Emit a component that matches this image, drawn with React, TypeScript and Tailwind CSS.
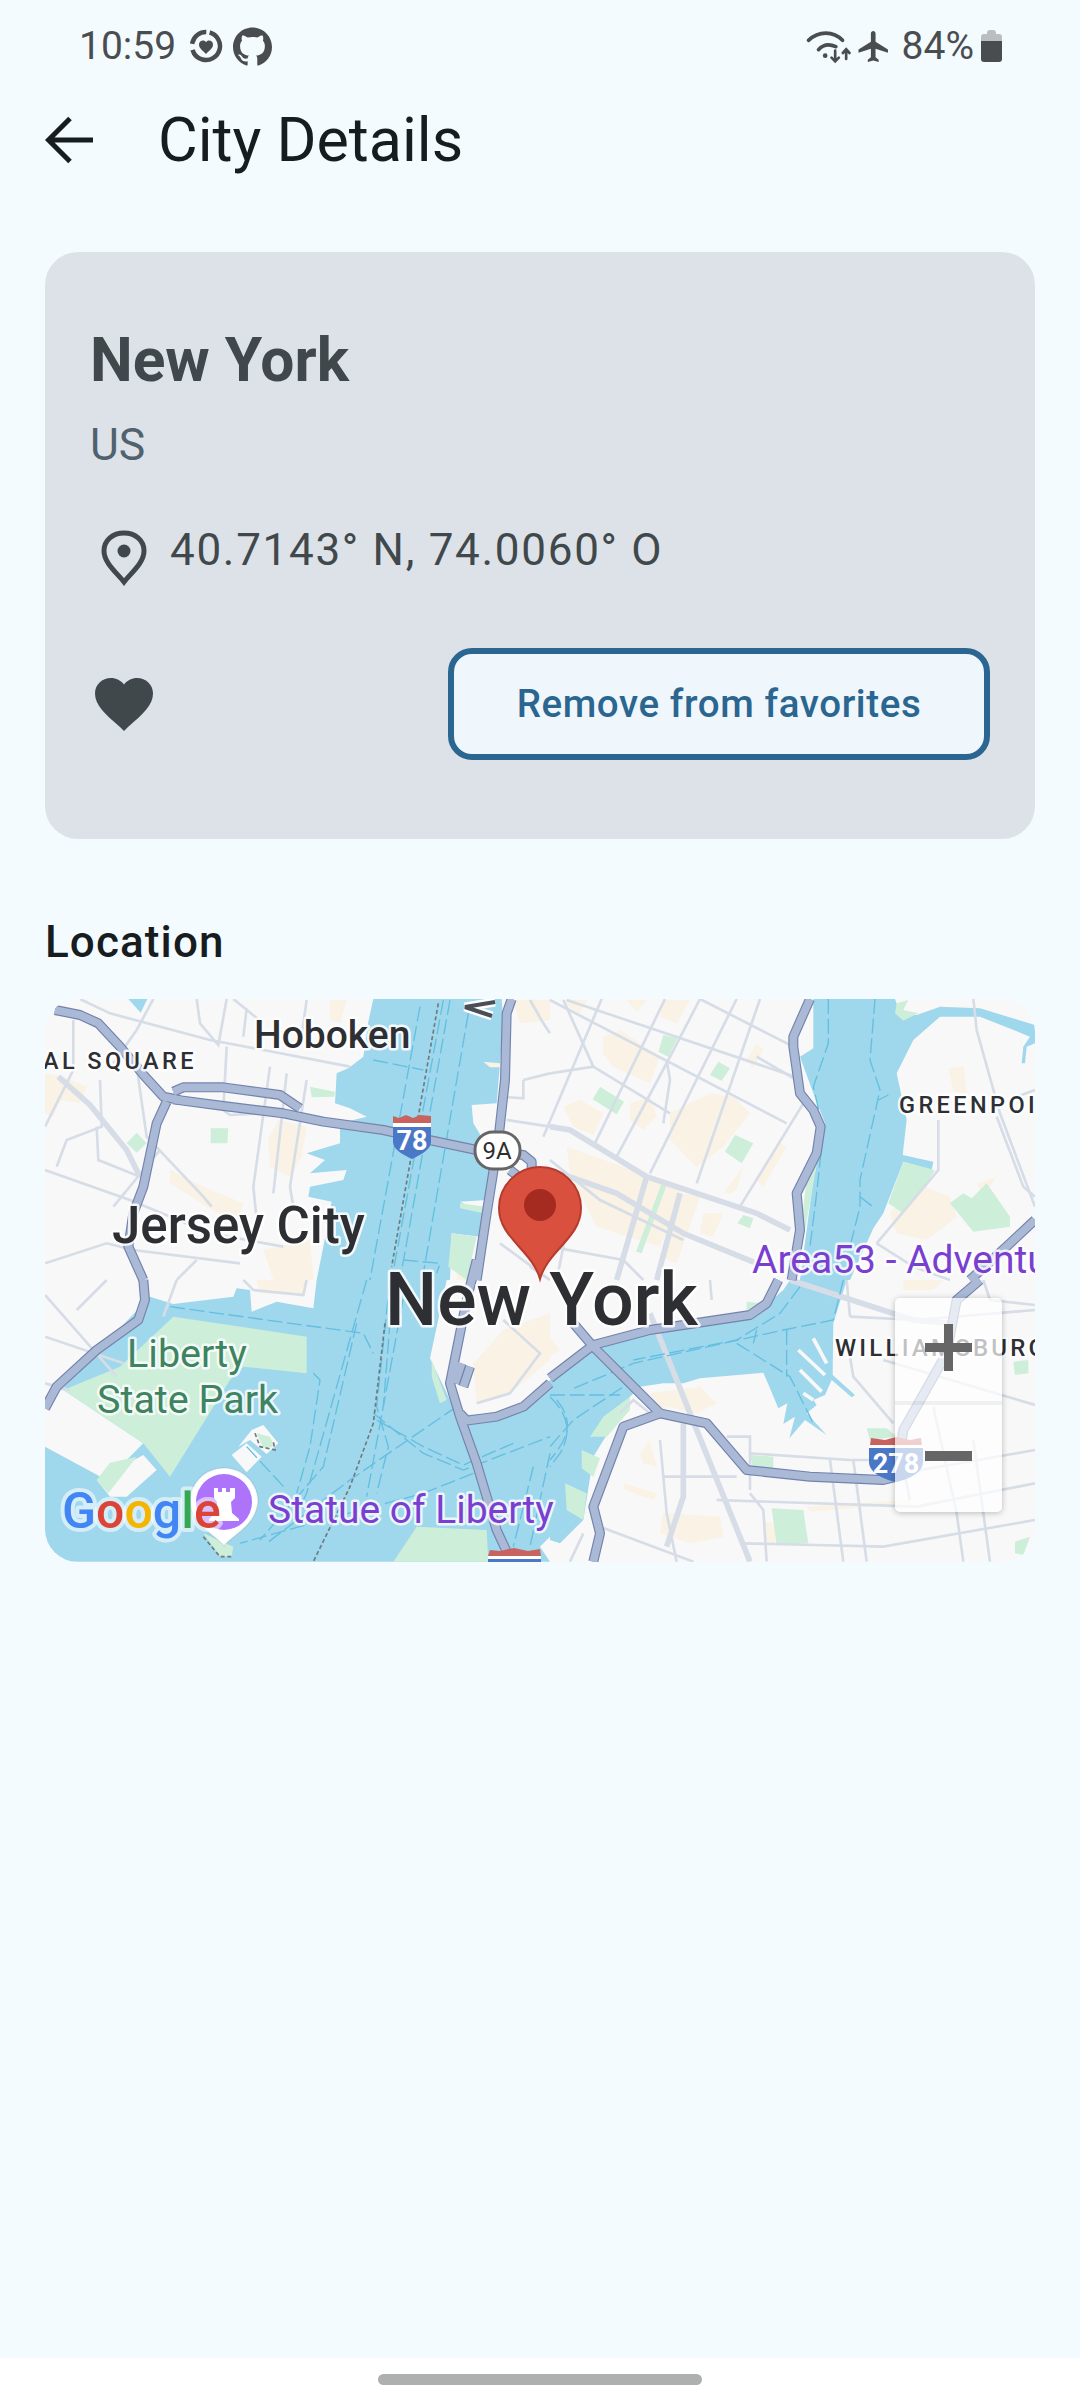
import React from "react";
import { SiGithub } from "react-icons/si";

type P = { a?: string[]; b?: string[]; c?: string[]; d?: string[] };
const T: Record<string, string> = {
  a: "translate(30 980) scale(0.33333)",
  b: "translate(30 1280) scale(0.33333)",
  c: "translate(550 980) scale(0.33333)",
  d: "translate(550 1280) scale(0.33333)",
};
function L({ p, ...rest }: { p: P } & React.SVGProps<SVGGElement>) {
  return (
    <g {...rest}>
      {(["a", "b", "c", "d"] as const).map((k) => (
        <g key={k} transform={T[k]}>
          {(p[k] || []).map((d, i) => (
            <path key={i} d={d} />
          ))}
        </g>
      ))}
    </g>
  );
}

const water: P = {
  a: [
    "M1030,57 L1015,125 L1000,230 L955,265 L920,280 L915,370 L960,385 L1010,410 L930,430 L930,490 L830,520 L885,540 L840,580 L950,570 L940,600 L840,620 L835,650 L905,665 L880,800 L860,900 L1260,900 L1265,760 L1350,770 L1360,700 L1290,665 L1370,660 L1390,530 L1330,430 L1325,375 L1400,370 L1420,130 L1415,57Z",
    "M295,57 L352,57 L332,98Z",
  ],
  b: [
    "M45,845 L45,380 L360,50 L430,72 L610,50 L620,25 L660,30 L665,95 L740,65 L850,85 L860,0 L1250,0 L1200,235 L1260,360 L1310,405 L1400,400 L1480,370 L1560,300 L1560,845Z",
  ],
  c: [
    "M790,57 L1035,57 L1050,100 L1100,105 L1170,80 L1290,85 L1455,135 L1455,190 L1430,200 L1425,250 L1415,250 L1420,200 L1440,170 L1290,110 L1170,110 L1090,180 L1040,280 L1070,420 L1058,525 L1150,545 L1145,570 L1060,545 L1000,700 L970,745 L900,900 L750,900 L790,600 L825,430 L790,340 L750,230 L790,205Z",
  ],
  d: [
    "M0,300 L150,190 L600,115 L700,30 L720,0 L890,0 L850,130 L848,285 L915,345 L905,352 L845,300 L825,345 L790,360 L800,375 L770,400 L830,465 L765,420 L718,475 L735,410 L700,432 L712,370 L685,385 L660,325 L640,278 L450,295 L400,310 L340,310 L270,320 L240,350 L130,530 L100,720 L30,790 L0,780Z",
  ],
};
const land: P = {
  b: [
    "M45,340 L100,330 L340,490 L230,600 L45,500Z",
    "M340,525 L380,570 L290,650 L240,650 L200,600Z",
    "M605,525 L650,577 L695,530 L650,490Z",
    "M625,500 L665,450 L700,435 L745,490 L710,522 L660,480Z",
    "M1560,770 L1530,800 L1560,845Z",
  ],
};
const parks: P = {
  a: [
    "M542,445 L595,445 L592,490 L542,490Z",
    "M290,490 L320,458 L350,490 L320,518Z",
    "M840,320 L915,335 L912,350 L845,352Z",
    "M1265,760 L1340,770 L1310,900 L1255,860Z",
    "M1290,670 L1365,680 L1360,700 L1290,685Z",
  ],
  b: [
    "M430,110 L830,170 L830,280 L640,260 L600,300 L420,590 L340,490 L100,330 L270,260Z",
    "M240,548 L200,600 L235,640 L320,530Z",
    "M680,460 L720,470 L735,500 L700,505Z",
    "M520,760 L610,800 L605,830 L570,830Z",
    "M1090,845 L1160,740 L1370,750 L1375,845Z",
    "M1205,240 L1250,360 L1230,370 L1205,290Z",
  ],
  c: [
    "M340,165 L382,175 L355,230 L325,215Z",
    "M505,245 L540,265 L515,302 L480,285Z",
    "M150,320 L222,365 L200,403 L128,358Z",
    "M555,465 L610,490 L575,550 L525,515Z",
    "M580,705 L610,715 L600,745 L562,730Z",
    "M335,610 L350,615 L275,820 L258,815Z",
    "M1060,545 L1155,570 L1130,610 L1060,700 L1015,670Z",
    "M1310,610 L1380,710 L1380,740 L1270,755 L1200,670 L1240,640 L1265,655Z",
    "M1040,70 L1075,60 L1060,90 L1105,100 L1060,122 L1035,100Z",
    "M770,600 L800,555 L760,780 L745,800Z",
  ],
  d: [
    "M590,65 L640,70 L620,100 L590,95Z",
    "M240,350 L160,410 L120,470 L170,470 L240,390Z",
    "M95,510 L150,535 L130,590 L95,565Z",
    "M45,610 L110,640 L100,720 L50,690Z",
    "M665,685 L760,690 L775,790 L680,795Z",
    "M600,525 L670,530 L670,570 L610,565Z",
    "M950,445 L1010,445 L1040,470 L960,480Z",
    "M1390,245 L1435,240 L1435,280 L1395,285Z",
    "M1395,785 L1440,770 L1420,825 L1395,820Z",
  ],
};
const blocks: P = {
  a: [
    "M45,280 L100,290 L170,320 L150,370 L90,360 L70,410 L45,400Z",
    "M715,480 L745,420 L830,440 L815,530 L780,590 L720,560Z",
    "M420,570 L520,620 L640,670 L620,730 L530,680 L420,610Z",
    "M700,810 L840,780 L850,900 L730,900Z",
    "M900,60 L950,60 L930,130 L900,120Z",
    "M1360,245 L1410,250 L1410,262 L1380,262Z",
    "M1450,60 L1560,60 L1560,120 L1470,130Z",
    "M1280,860 L1330,850 L1320,900 L1280,900Z",
  ],
  b: [
    "M1330,250 L1420,150 L1560,100 L1560,240 L1440,340 L1340,370Z",
    "M680,0 L830,0 L820,45 L690,40Z",
  ],
  c: [
    "M45,60 L110,60 L90,100 L60,85Z",
    "M230,60 L290,60 L260,95Z",
    "M160,170 L210,150 L330,230 L300,310 L190,260 L160,220Z",
    "M40,380 L90,360 L160,400 L130,465 L70,440Z",
    "M340,60 L420,60 L380,130 L330,110Z",
    "M360,400 L480,340 L550,350 L600,400 L520,500 L440,560 L360,480Z",
    "M240,370 L300,350 L320,410 L280,450 L240,420Z",
    "M50,500 L190,550 L300,590 L400,630 L330,800 L140,740 L60,580Z",
    "M400,640 L450,650 L380,850 L330,830Z",
    "M520,640 L580,560 L560,630 L540,640Z",
    "M620,190 L640,210 L610,265 L590,240Z",
    "M460,700 L520,700 L490,770 L450,760Z",
    "M640,620 L710,500 L690,490 L620,600Z",
    "M1195,265 L1240,260 L1250,340 L1210,335Z",
    "M1020,700 L1100,610 L1200,650 L1220,710 L1130,780 L1040,760Z",
    "M1280,610 L1340,590 L1300,650Z",
  ],
  d: [
    "M0,170 L30,210 L0,230Z",
    "M300,340 L450,320 L500,370 L440,400 L350,380 L330,400Z",
    "M270,520 L300,480 L320,560 L280,550Z",
    "M220,610 L320,640 L310,660 L225,630Z",
    "M340,700 L510,710 L520,770 L420,790 L330,760Z",
    "M770,680 L1080,660 L1080,670 L780,695Z",
    "M1060,0 L1180,0 L1150,30 L1060,30Z",
    "M640,725 L680,730 L675,790 L645,790Z",
  ],
};
const minor: P = {
  a: [
    "M150,57 L240,100 L540,180 L700,210 L960,260",
    "M500,57 L510,130 L565,195 L590,57",
    "M590,200 L580,390 L600,405 L700,400",
    "M610,57 L700,130 M650,85 L640,170",
    "M720,260 L670,620 L680,720",
    "M770,280 L730,640 M830,300 L780,620 L790,680",
    "M45,570 L300,660 L540,760 L760,800",
    "M45,850 L230,790 L310,810 L630,850",
    "M320,260 L350,470 L520,650 L545,680",
    "M370,57 L320,150 L250,250",
    "M130,120 L130,260",
    "M45,440 L130,270",
    "M210,300 L215,440 L110,480 L80,560",
    "M200,440 L205,540 L330,590",
    "M250,680 L390,510",
    "M830,60 L810,200 M1500,860 L1560,900",
    "M1480,300 L1560,280 M1410,350 L1480,355 L1480,300",
    "M1430,420 L1560,440",
    "M1500,60 L1540,130 L1560,160",
    "M500,840 L440,900",
    "M1410,790 L1560,900",
    "M1560,600 L1500,540",
  ],
  b: [
    "M45,170 L280,250",
    "M45,45 L260,290",
    "M140,90 L230,0",
    "M440,0 L400,110",
    "M640,0 L670,30 L820,45 L830,0",
    "M45,310 L120,330",
    "M1340,370 L1440,340 L1530,220 L1420,120",
  ],
  c: [
    "M-20,470 L155,57",
    "M130,500 L345,57",
    "M200,530 L355,240 L450,57",
    "M300,580 L560,57",
    "M440,610 L630,57",
    "M570,680 L760,370",
    "M0,60 L710,430",
    "M50,60 L735,290",
    "M450,57 L730,200",
    "M0,280 L130,260 L360,400",
    "M620,230 L740,300",
    "M40,60 L130,260",
    "M350,240 L360,300 L340,430",
    "M1270,57 L1280,150 L1350,400 L1455,680",
    "M1165,420 L1165,570 L980,790",
    "M1340,410 L1420,620 L1455,650",
    "M980,790 L1090,860 L1200,900",
    "M1455,330 L1400,350",
    "M0,800 L220,840 L280,900",
    "M0,540 L150,660 L400,780",
    "M60,700 L20,900",
  ],
  d: [
    "M530,470 L600,470 L600,630",
    "M600,520 L900,540 L1020,540",
    "M340,590 L560,590",
    "M500,660 L1100,680 L1455,610",
    "M600,640 L640,690 L650,845",
    "M840,540 L880,845",
    "M910,540 L950,845",
    "M580,790 L1000,800 L1455,720",
    "M1000,590 L1455,510",
    "M900,110 L1100,120 L1455,90",
    "M900,230 L910,290 L1030,430",
    "M1000,240 L1455,375",
    "M1150,380 L1220,700 L1240,845",
    "M1270,480 L1320,845",
    "M1080,660 L1040,470",
    "M480,0 L485,60 M890,0 L900,110",
    "M150,740 L430,845",
    "M60,845 L100,760",
    "M330,480 L350,700 L380,845",
    "M1300,0 L1320,60 L1455,75",
    "M210,400 L250,360 L300,400",
  ],
};
const major: P = {
  a: ["M85,290 L180,375 L290,510 L330,590"],
  c: [
    "M0,440 L60,450 L290,590 L620,700 L720,750",
    "M0,570 L200,640 L400,760 L620,850",
    "M290,590 L200,900",
    "M390,640 L320,900",
  ],
  d: [
    "M720,0 L1090,120 L1200,130",
    "M300,100 L420,400 L600,845",
    "M400,430 L400,650 L350,800",
  ],
};
const ferries: P = {
  a: [
    "M1170,80 L1020,900",
    "M1240,60 L1085,900",
    "M1260,60 L1110,900",
    "M1315,100 L1180,880",
    "M1030,240 L1180,270",
    "M1120,840 L1230,850 L1220,880",
  ],
  b: [
    "M1010,0 L830,640 L790,720",
    "M1130,0 L1010,650",
    "M980,130 L880,560 L690,780",
    "M1080,0 L1040,380 L1075,500 L1040,640",
    "M1090,0 L1060,380",
    "M420,80 L1000,160 L1030,220",
    "M850,280 L870,300 L840,500 L800,640",
    "M1040,420 L1180,500 L1300,555 L1450,490",
    "M1030,400 L1180,520 L1300,570 L1560,470",
    "M1280,380 L1090,510 L960,600 L710,790",
    "M1330,580 L1180,640 L880,720 L630,790",
    "M650,500 L770,630",
    "M1560,520 L1500,800",
    "M1510,560 L1450,800",
  ],
  c: [
    "M835,57 L835,190 L790,320 L820,450 L800,640 L780,800",
    "M975,57 L960,240 L990,330 L930,600 L930,680 L900,800",
    "M985,360 L1015,345",
    "M930,650 L975,685",
  ],
  d: [
    "M880,0 L850,120 L700,150 L250,250 L60,330",
    "M750,20 L690,100 L560,180 L250,240",
    "M620,150 L610,190",
    "M710,150 L710,290",
    "M560,190 L720,290 L790,430",
    "M0,345 L210,345",
    "M0,500 L70,420 L220,320",
    "M0,350 C50,400 70,450 30,520 L0,560",
    "M20,360 C70,420 60,470 0,540",
  ],
};
const highways: P = {
  a: [
    "M75,90 L150,105 L205,130 L270,200 L345,290 L400,350 L450,360",
    "M430,358 L580,378 L760,400 L880,425 L1060,450 L1150,470 L1340,510",
    "M430,335 L460,322 L580,322 L750,345 L810,385",
    "M410,365 L380,430 L340,620 L310,700 L295,800 L340,900",
    "M1445,57 L1430,100 L1425,300 L1405,480 L1370,700 L1340,900",
    "M1340,510 L1480,525 L1505,545 L1505,590",
    "M1440,570 L1490,610",
  ],
  b: [
    "M340,0 L345,60 L325,120 L200,210 L80,320 L45,385",
    "M1340,-60 L1310,60 L1272,250 L1260,310 L1290,410 L1340,550 L1400,750 L1430,815",
    "M1290,400 L1310,422 L1400,410 L1480,380 L1560,310",
    "M1295,250 L1275,310 M1320,260 L1300,320",
  ],
  c: [
    "M780,57 L730,170 L730,200 L750,340 L790,390 L812,440 L800,520 L740,640 L750,750 L725,900",
    "M1455,720 L1380,790 L1260,900",
  ],
  d: [
    "M0,295 L130,195 L300,150 L600,105 L650,70 L685,0",
    "M70,130 L130,200 L330,400 L470,430 L590,570 L780,590 L1000,600 L1040,590 L1060,450 L1190,220 L1220,60 L1290,0",
    "M330,400 L220,440 L130,680 L150,760 L130,845",
  ],
};
const piers: P = {
  d: [
    "M745,210 L825,285",
    "M790,175 L830,250",
    "M750,270 L815,335",
    "M790,360 L760,340",
  ],
};

function MapDrawing() {
  return (
    <svg
      viewBox="45 999 990 563"
      className="block w-full h-full font-['Roboto',sans-serif]"
      xmlns="http://www.w3.org/2000/svg"
    >
      <rect x="45" y="999" width="990" height="563" fill="#f8f8f9" />
      <L p={water} fill="#9fd7ec" />
      <L p={land} fill="#f8f8f9" />
      <L p={piers} fill="none" stroke="#f8f8f9" strokeWidth="11" />
      <L p={blocks} fill="#f9f2e5" />
      <L p={parks} fill="#cdeed9" />
      <L p={minor} fill="none" stroke="#d6dde7" strokeWidth="8" />
      <L p={major} fill="none" stroke="#d6dde7" strokeWidth="17" />
      <L p={ferries} fill="none" stroke="#63bfe0" strokeWidth="4" strokeDasharray="45 14" />
      <g fill="none" stroke="#707a80" strokeWidth="5" strokeDasharray="12 8">
        <path transform={T.a} d="M1225,70 L1085,860" />
        <path transform={T.b} d="M1065,130 L1030,430 L960,620 L850,845" />
        <path transform={T.b} d="M675,460 L690,500 L735,510 L730,485 M520,770 L570,830 L605,830" />
      </g>
      <L p={highways} fill="none" stroke="#7483ad" strokeWidth="30" strokeLinejoin="round" />
      <L p={highways} fill="none" stroke="#aab9d5" strokeWidth="23" strokeLinejoin="round" />

      {/* I-78 */}
      <g>
        <path d="M393,1123 L393,1116 L399,1118 L406,1115 L413,1118 L420,1115 L431,1116 L431,1123Z" fill="#c9635f" />
        <rect x="393" y="1123" width="38" height="4" fill="#fff" />
        <path d="M393,1127 L431,1127 L431,1142 C431,1150 420,1155 412,1159 C404,1155 393,1150 393,1142Z" fill="#4b78c6" />
        <text x="412" y="1150" textAnchor="middle" fontSize="27" fontWeight="700" fill="#fff">78</text>
      </g>
      {/* I-278 */}
      <g>
        <path d="M870,1445 L871,1438 L885,1440 L896,1437 L910,1440 L921,1438 L922,1445Z" fill="#c9635f" />
        <rect x="869" y="1445" width="54" height="3" fill="#fff" />
        <path d="M869,1448 L923,1448 L923,1462 C923,1472 910,1479 896,1482 C882,1479 869,1472 869,1462Z" fill="#4b78c6" />
        <text x="896" y="1473" textAnchor="middle" fontSize="27" fontWeight="700" fill="#fff">278</text>
      </g>
      {/* bottom shield */}
      <g>
        <path d="M488,1556 L490,1550 L500,1551 L514,1548 L528,1551 L540,1549 L541,1556Z" fill="#c9635f" />
        <rect x="488" y="1556" width="53" height="3" fill="#fff" />
        <rect x="488" y="1559" width="53" height="4" fill="#4b78c6" />
      </g>
      {/* 9A */}
      <rect x="475" y="1132" width="45" height="37" rx="18" fill="#fff" stroke="#666" strokeWidth="3" />
      <text x="497" y="1159" textAnchor="middle" fontSize="24" fill="#2d2f33">9A</text>
      {/* chevron */}
      <path d="M495,1002 L465,1007 L492,1016" fill="none" stroke="#fff" strokeWidth="9" />
      <path d="M495,1002 L465,1007 L492,1016" fill="none" stroke="#4a4f55" strokeWidth="4" />

      {/* statue marker */}
      <path d="M224,1546 C216,1535 193,1527 190,1502 C190,1483 205,1468 224,1468 C243,1468 258,1483 258,1502 C255,1527 232,1535 224,1546Z" fill="#fff" stroke="#000" strokeOpacity="0.08" strokeWidth="1.5" />
      <circle cx="224" cy="1502" r="28" fill="#ae73fb" />
      <path d="M214,1488 L218,1488 L218,1492 L222,1492 L222,1488 L226,1488 L226,1492 L230,1492 L230,1488 L235,1488 L235,1498 L231,1502 L232,1513 L239,1519 L239,1521 L209,1521 L209,1519 L216,1513 L217,1502 L214,1498Z" fill="#fff" />

      {/* pin */}
      <path d="M540,1167 C562,1167 581,1185 581,1208 C581,1238 548,1250 540,1279 C532,1250 499,1238 499,1208 C499,1185 518,1167 540,1167Z" fill="#d9503f" stroke="#b73b2c" strokeWidth="2" />
      <circle cx="540" cy="1205" r="16" fill="#a52a1f" />

      <g stroke="#fff" strokeOpacity="0.85" strokeWidth="5" strokeLinejoin="round" paintOrder="stroke" fill="#2d2f33" fontWeight="500">
        <text x="385" y="1325" fontSize="73.5">New York</text>
        <text x="112" y="1243" fontSize="51">Jersey City</text>
        <text x="254" y="1048" fontSize="39">Hoboken</text>
        <text x="43" y="1069" fontSize="23.5" letterSpacing="3.4">AL SQUARE</text>
        <text x="899" y="1113" fontSize="23.5" letterSpacing="3.4">GREENPOINT</text>
        <text x="835" y="1356" fontSize="24" letterSpacing="3.2">WILLIAMSBURG</text>
      </g>
      <g stroke="#fff" strokeOpacity="0.8" strokeWidth="5" strokeLinejoin="round" paintOrder="stroke" fill="#3e8462" fontSize="39.5">
        <text x="127" y="1367">Liberty</text>
        <text x="97" y="1413">State Park</text>
      </g>
      <g stroke="#fff" strokeOpacity="0.8" strokeWidth="5" strokeLinejoin="round" paintOrder="stroke" fill="#7a3fd0" fontSize="39">
        <text x="752" y="1273">Area53 - Adventure</text>
        <text x="268" y="1523">Statue of Liberty</text>
      </g>
      <text x="62" y="1528" fontSize="50" fontWeight="500" stroke="#fff" strokeOpacity="0.55" strokeWidth="8" strokeLinejoin="round" paintOrder="stroke">
        <tspan fill="#4285f4">G</tspan>
        <tspan fill="#db4437">o</tspan>
        <tspan fill="#f4b400">o</tspan>
        <tspan fill="#4285f4">g</tspan>
        <tspan fill="#34a853">l</tspan>
        <tspan fill="#db4437">e</tspan>
      </text>
    </svg>
  );
}

function HeartRing() {
  return (
    <svg viewBox="0 0 34 34" className="w-[34px] h-[34px]">
      <circle cx="17" cy="17" r="14" fill="none" stroke="#4a4d50" strokeWidth="4.5" strokeDasharray="58 6 20 4" transform="rotate(-75 17 17)" />
      <path d="M17,25 C13,21 10,19 10,15.5 C10,13 12,11.5 14,11.5 C15.3,11.5 16.4,12.2 17,13.2 C17.6,12.2 18.7,11.5 20,11.5 C22,11.5 24,13 24,15.5 C24,19 21,21 17,25Z" fill="#4a4d50" />
    </svg>
  );
}

function WifiIcon() {
  return (
    <svg viewBox="140 50 140 105" className="w-[47px] h-[35px]" fill="none" stroke="#4a4d50" strokeLinecap="round">
      <path d="M150,84 C180,55 225,55 252,84" strokeWidth="11" />
      <path d="M180,112 C195,95 215,95 232,103" strokeWidth="11" />
      <circle cx="200" cy="130" r="7" fill="#4a4d50" stroke="none" />
      <path d="M230,115 L230,146 M219,136 L230,147 L241,136" strokeWidth="8" />
      <path d="M263,140 L263,112 M253,122 L263,111 L273,122" strokeWidth="8" />
    </svg>
  );
}

function PlaneIcon() {
  return (
    <svg viewBox="2 2 20 20" className="w-[32px] h-[31px]" fill="#4a4d50">
      <path d="M21 16v-2l-8-5V3.5c0-.83-.67-1.5-1.5-1.5S10 2.67 10 3.5V9l-8 5v2l8-2.5V19l-2 1.5V22l3.5-1 3.5 1v-1.5L13 19v-5.5l8 2.5z" />
    </svg>
  );
}

function BatteryIcon() {
  return (
    <svg viewBox="0 0 21 32" className="w-[21px] h-[32px]">
      <path d="M6,3 Q6,0 9,0 L12,0 Q15,0 15,3 L15,4 L18,4 Q21,4 21,7 L21,11 L0,11 L0,7 Q0,4 3,4 L6,4Z" fill="#b9bec1" />
      <path d="M0,11 L21,11 L21,29 Q21,32 18,32 L3,32 Q0,32 0,29Z" fill="#4a4d50" />
    </svg>
  );
}

export default function App() {
  return (
    <div className="w-[1080px] h-[2400px] bg-[#f4fbff] flex flex-col font-['Roboto',sans-serif] overflow-hidden">
      {/* status bar */}
      <div className="h-[88px] pl-[79px] pr-[78px] pt-[23px] flex items-start justify-between text-[#4a4d50] text-[39px] leading-[46px]">
        <div className="flex items-center">
          <span>10:59</span>
          <span className="ml-[13px]"><HeartRing /></span>
          <SiGithub className="ml-[10px] w-[39px] h-[39px] text-[#4a4d50]" />
        </div>
        <div className="flex items-center">
          <WifiIcon />
          <span className="ml-[6px]"><PlaneIcon /></span>
          <span className="ml-[12px]">84%</span>
          <span className="ml-[7px]"><BatteryIcon /></span>
        </div>
      </div>

      {/* top bar */}
      <div className="h-[104px] flex items-center pl-[45px]">
        <svg viewBox="0 0 48 48" className="w-[48px] h-[48px]" fill="none" stroke="#171c1f" strokeWidth="5">
          <path d="M48,24 L4,24 M25,2.5 L3.5,24 L25,45.5" />
        </svg>
        <h1 className="ml-[65px] text-[61px] leading-[72px] text-[#171c1f] font-normal">City Details</h1>
      </div>

      {/* card */}
      <div className="mt-[60px] mx-[45px] h-[587px] rounded-[33px] bg-[#dde2e8] px-[45px] pt-[73px] flex flex-col">
        <div className="text-[60.5px] leading-[72px] font-bold text-[#40484c]">New York</div>
        <div className="mt-[22px] text-[44.5px] leading-[52px] text-[#50626f]">US</div>
        <div className="mt-[53px] flex items-start">
          <svg viewBox="0 0 46 56" className="ml-[11px] w-[46px] h-[56px] mt-[6px]" fill="none" stroke="#40484c" strokeWidth="5">
            <path d="M23,52 C16,43 3,33 3,21 C3,10 12,3 23,3 C34,3 43,10 43,21 C43,33 30,43 23,52Z" />
            <circle cx="23" cy="21" r="6.5" fill="#40484c" stroke="none" />
          </svg>
          <span className="ml-[23px] text-[44px] leading-[52px] tracking-[1.7px] text-[#40484c]">40.7143° N, 74.0060° O</span>
        </div>
        <div className="mt-[62px] flex items-center justify-between pr-0">
          <svg viewBox="0 0 58 53" className="ml-[5px] w-[58px] h-[53px]" fill="#40484c">
            <path d="M29,53 L25,49 C10,36 0,27 0,15.5 C0,6.5 7,0 16,0 C21,0 26,2.5 29,6.5 C32,2.5 37,0 42,0 C51,0 58,6.5 58,15.5 C58,27 48,36 33,49Z" />
          </svg>
          <button className="w-[542px] h-[112px] rounded-[24px] border-[6px] border-[#2b6690] bg-[#eff6fc] text-[#2b6690] text-[38.5px] font-medium tracking-[0.6px]">
            Remove from favorites
          </button>
        </div>
      </div>

      {/* location */}
      <div className="mt-[77px] mx-[45px] text-[44px] leading-[52px] font-medium tracking-[1.1px] text-[#171c1f]">Location</div>
      <div className="relative mt-[31px] mx-[45px] h-[563px] rounded-[33px] overflow-hidden">
        <MapDrawing />
        <div className="absolute left-[850px] top-[299px] w-[107px] h-[214px] rounded-[5px] bg-white/70 shadow-[0_1px_6px_rgba(0,0,0,0.25)] flex flex-col">
          <div className="h-[107px] flex items-center justify-center border-b-[4px] border-[#000]/5">
            <svg viewBox="0 0 47 47" className="w-[47px] h-[47px] mt-[-5px]" fill="#666">
              <rect x="0" y="19" width="47" height="9" />
              <rect x="19" y="0" width="9" height="47" />
            </svg>
          </div>
          <div className="flex-1 flex items-center justify-center">
            <svg viewBox="0 0 47 10" className="w-[47px] h-[10px] mt-[-5px]" fill="#666">
              <rect x="0" y="0" width="47" height="10" />
            </svg>
          </div>
        </div>
      </div>

      <div className="flex-1" />
      {/* home indicator */}
      <div className="h-[42px] bg-white pt-[16px] flex justify-center">
        <div className="w-[324px] h-[11px] rounded-full bg-[#aeb0af]" />
      </div>
    </div>
  );
}
